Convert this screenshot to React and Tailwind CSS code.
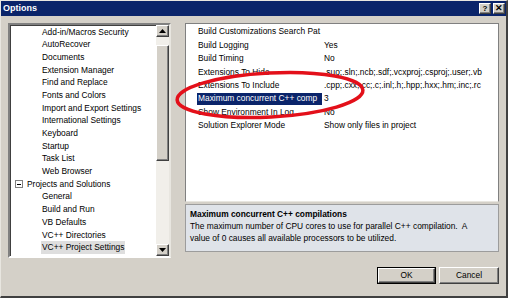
import React from "react";

const treeItems = [
  { t: "Add-in/Macros Security" },
  { t: "AutoRecover" },
  { t: "Documents" },
  { t: "Extension Manager" },
  { t: "Find and Replace" },
  { t: "Fonts and Colors" },
  { t: "Import and Export Settings" },
  { t: "International Settings" },
  { t: "Keyboard" },
  { t: "Startup" },
  { t: "Task List" },
  { t: "Web Browser" },
  { t: "Projects and Solutions", parent: true },
  { t: "General" },
  { t: "Build and Run" },
  { t: "VB Defaults" },
  { t: "VC++ Directories" },
  { t: "VC++ Project Settings", sel: true },
];

const props = [
  ["Build Customizations Search Pat", ""],
  ["Build Logging", "Yes"],
  ["Build Timing", "No"],
  ["Extensions To Hide", ".suo;.sln;.ncb;.sdf;.vcxproj;.csproj;.user;.vb"],
  ["Extensions To Include", ".cpp;.cxx;.cc;.c;.inl;.h;.hpp;.hxx;.hm;.inc;.rc"],
  ["Maximum concurrent C++ comp", "3", true],
  ["Show Environment In Log", "No"],
  ["Solution Explorer Mode", "Show only files in project"],
];

function Btn3D({ children, className = "" }) {
  return (
    <div
      className={
        "flex items-center justify-center bg-[#d4d0c8] border border-t-white border-l-white border-r-[#404040] border-b-[#404040] shadow-[inset_-1px_-1px_0_#808080] " +
        className
      }
    >
      {children}
    </div>
  );
}

function Arrow({ up }) {
  return (
    <svg width="7" height="4" viewBox="0 0 7 4">
      {up ? <polygon points="0,4 7,4 3.5,0" fill="#000" /> : <polygon points="0,0 7,0 3.5,4" fill="#000" />}
    </svg>
  );
}

export default function App() {
  return (
    <div className="relative w-[510px] h-[301px] bg-white font-['Liberation_Sans',Arial,sans-serif] text-black overflow-hidden">
      <div className="w-[508px] h-[298px] bg-[#d4d0c8] flex flex-col border-r-2 border-b-2 border-r-[#404040] border-b-[#404040] border-l border-t border-l-[#e8e6e0] border-t-[#e8e6e0]">
        {/* title bar */}
        <div className="h-[15px] bg-[#0a246a] flex items-center justify-between pl-[2px] pr-[1px] shrink-0">
          <span className="text-white font-bold text-[9px] leading-none">Options</span>
          <div className="flex gap-[2px]">
            <Btn3D className="w-[12px] h-[11px] text-[8px] font-bold leading-none">?</Btn3D>
            <Btn3D className="w-[12px] h-[11px] text-[9px] font-bold leading-none">✕</Btn3D>
          </div>
        </div>

        {/* body */}
        <div className="flex-1 flex flex-col pl-[7px] pr-[7px] pt-[7px]">
          <div className="flex gap-[14px] h-[235px]">
            {/* tree panel */}
            <div className="w-[163px] h-[235px] border-2 border-t-[#808080] border-l-[#808080] border-b-white border-r-[#e8e6e0] shadow-[inset_1px_1px_0_#404040] flex bg-white">
              <div className="flex-1 pt-[0.5px] overflow-hidden text-[8.4px] leading-[12.7px]">
                {treeItems.map((it) =>
                  it.parent ? (
                    <div key={it.t} className="h-[12.7px] flex items-center pl-[5px] whitespace-nowrap">
                      <div className="w-[8px] h-[8px] border border-[#808080] bg-white flex items-center justify-center mr-[4px]">
                        <div className="w-[4px] h-px bg-black" />
                      </div>
                      <span>{it.t}</span>
                    </div>
                  ) : (
                    <div key={it.t} className="h-[12.7px] flex items-center pl-[31px] whitespace-nowrap">
                      <span className={it.sel ? "bg-[#dedede] px-[1px]" : "px-[1px]"}>{it.t}</span>
                    </div>
                  )
                )}
              </div>
              {/* scrollbar */}
              <div className="w-[13px] flex flex-col bg-[#f1efea]">
                <Btn3D className="h-[12px] w-[13px]">
                  <Arrow up />
                </Btn3D>
                <div className="h-[8px]" />
                <Btn3D className="h-[116px] w-[13px]" />
                <div className="flex-1" />
                <Btn3D className="h-[12px] w-[13px]">
                  <Arrow />
                </Btn3D>
              </div>
            </div>

            {/* right column */}
            <div className="w-[314px] flex flex-col gap-[2px]">
              <div className="h-[179px] bg-white border border-t-[#808080] border-l-[#808080] border-b-[#e8e6e0] border-r-[#808080] pt-[1px] text-[8.4px]">
                {props.map(([n, v, sel]) => (
                  <div key={n} className="h-[13.4px] flex items-center whitespace-nowrap">
                    <div className="ml-[11px] w-[125px] h-[12px] flex items-center overflow-hidden">
                      <span className={sel ? "bg-[#0a246a] text-white w-full h-full flex items-center pl-[1px]" : "pl-[1px]"}>{n}</span>
                    </div>
                    <div className="pl-[2px] overflow-hidden flex-1">{v}</div>
                  </div>
                ))}
              </div>
              <div className="h-[48px] bg-[#dfe3e9] border border-[#9c9c9c] pl-[4px] pt-[3px] text-[8.4px] leading-[12px]">
                <div className="font-bold">Maximum concurrent C++ compilations</div>
                <div>The maximum number of CPU cores to use for parallel C++ compilation.&nbsp; A</div>
                <div>value of 0 causes all available processors to be utilized.</div>
              </div>
            </div>
          </div>

          {/* buttons */}
          <div className="mt-[9px] flex justify-end gap-[3px] pr-[0px]">
            <div className="w-[59px] h-[17px] border border-black">
              <Btn3D className="w-full h-full text-[8.4px]">OK</Btn3D>
            </div>
            <Btn3D className="w-[60px] h-[17px] text-[8.4px]">Cancel</Btn3D>
          </div>
        </div>
      </div>

      {/* red annotation ellipse */}
      <svg className="absolute left-0 top-0 pointer-events-none" width="510" height="301">
        <ellipse cx="270" cy="95" rx="93" ry="22" fill="none" stroke="#e3101a" strokeWidth="3.5" transform="rotate(-3 270 95)" />
      </svg>
    </div>
  );
}
